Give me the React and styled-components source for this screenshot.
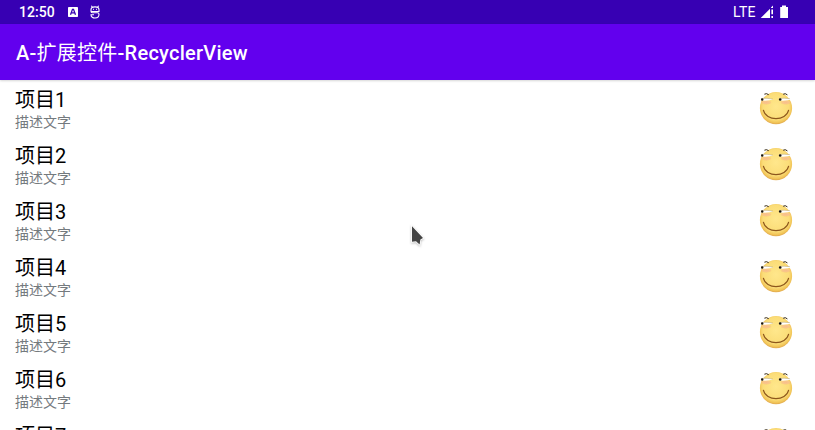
import React from 'react';
import styled, { createGlobalStyle } from 'styled-components';

const GlobalStyle = createGlobalStyle`
  * { box-sizing: border-box; }
  html, body { margin: 0; height: 100%; overflow: hidden; background: #fff; }
  body { font-family: Roboto, "Noto Sans CJK SC", sans-serif; }
`;

const Screen = styled.main`
  height: 430px;
  width: 815px;
  display: flex;
  flex-direction: column;
  overflow: hidden;
  background: #fff;
`;

const StatusBar = styled.div`
  flex: 0 0 24px;
  display: flex;
  justify-content: space-between;
  padding: 0 25px 0 19px;
  background: #3700b3;
  color: #fff;
`;

const StatusGroup = styled.div`
  display: flex;
  align-items: center;
  height: 24px;
`;

const Clock = styled.span`
  width: 48px;
  font-size: 14px;
  line-height: 24px;
  font-weight: 500;
  letter-spacing: 0.05px;
`;

const Network = styled.span`
  width: 27px;
  font-size: 14px;
  line-height: 24px;
  letter-spacing: 0.3px;
`;

const AppBar = styled.header`
  flex: 0 0 56px;
  display: flex;
  align-items: center;
  padding: 0 16px;
  background: #6200ee;
  color: #fff;
  box-shadow: 0 1px 2px rgba(0, 0, 0, 0.16);
  z-index: 1;
`;

const Title = styled.h1`
  margin: 0;
  font-size: 20px;
  line-height: 28px;
  font-weight: 500;
  letter-spacing: 0.25px;
  white-space: nowrap;
`;

const TitleCjk = styled.span`
  font-family: "Noto Sans CJK SC", sans-serif;
  font-weight: 400;
`;

const List = styled.ul`
  flex: 1;
  min-height: 0;
  margin: 0;
  padding: 0;
  list-style: none;
  overflow: hidden;
`;

const Item = styled.li`
  height: 56px;
  display: flex;
  justify-content: space-between;
  padding: 8px 21px 0 15px;
`;

const ItemTitle = styled.div`
  font-size: 20px;
  line-height: 24px;
  height: 24px;
  color: #000;
`;

const ItemText = styled.div`
  font-size: 14px;
  line-height: 20px;
  height: 20px;
  color: #747a7e;
`;

const FaceSvg = styled.svg`
  width: 36px;
  height: 36px;
  margin-top: 2px;
`;

const Pointer = styled.svg`
  position: absolute;
  left: 408px;
  top: 222px;
  z-index: 2;
`;

const PointerShape = styled.path`
  filter: drop-shadow(0 1px 1px rgba(0, 0, 0, 0.25));
`;

function Face() {
  return (
    <FaceSvg viewBox="0 0 36 36">
      <defs>
        <radialGradient id="skin" cx="50%" cy="45%" r="54%">
          <stop offset="0" stopColor="#ffe78c" />
          <stop offset="0.75" stopColor="#fbdd78" />
          <stop offset="0.93" stopColor="#f1c457" />
          <stop offset="1" stopColor="#e3ad50" />
        </radialGradient>
        <radialGradient id="blush">
          <stop offset="0" stopColor="#f8bd8c" />
          <stop offset="0.6" stopColor="#f9c38a" stopOpacity="0.85" />
          <stop offset="1" stopColor="#f7b578" stopOpacity="0" />
        </radialGradient>
      </defs>
      <circle cx="18" cy="18.1" r="16.1" fill="url(#skin)" />
      <ellipse cx="8.2" cy="12.4" rx="5.6" ry="2.5" fill="url(#blush)" />
      <ellipse cx="27.8" cy="12.4" rx="5.6" ry="2.5" fill="url(#blush)" />
      <path d="M3 8.6Q9 7.9 15.5 9.3Q10 11.1 4.2 10.5Z" fill="#fff" />
      <path d="M21 8.6Q27 7.9 34.5 9.2Q28 11.1 22 10.5Z" fill="#fff" />
      <path d="M3 8.5Q9 7.8 15 9.1M21 8.5Q26 7.8 32 8.7" fill="none" stroke="#9a8a68" strokeWidth="0.4" />
      <circle cx="4.2" cy="9.5" r="1.2" fill="#18150f" />
      <circle cx="22.2" cy="9.5" r="1.3" fill="#18150f" />
      <path d="M6.4 4.2Q8.4 2.9 10.7 4.7M25.2 4.2Q27.4 2.9 29.4 4.9" fill="none" stroke="#30240f" strokeWidth="1" />
      <path d="M5.3 19.8C8 31.6 28 31.6 30.7 19.8" fill="none" stroke="#8d571c" strokeWidth="1.1" />
    </FaceSvg>
  );
}

export default function App() {
  return (
    <Screen>
      <GlobalStyle />
      <StatusBar>
        <StatusGroup>
          <Clock>12:50</Clock>
          <svg width="42" height="24" viewBox="0 0 42 24">
            <rect x="1" y="7" width="10" height="10" rx="0.8" fill="#fff" />
            <path d="M3.5 14.7 5.5 9.3H6.5L8.5 14.7M4.5 12.8H7.6" fill="none" stroke="#3700b3" strokeWidth="1.3" />
            <path d="M24.4 5.8 25.2 7M31.6 5.8 30.8 7M24 11.5V9.8C24 5.9 32 5.9 32 9.8V11.5H24C24 12.5 24.5 12.7 25.4 12.7H30.5C31.5 12.7 32 13.2 32 14.2C32 19.2 24 19.2 24 14.8H27" fill="none" stroke="#fff" strokeWidth="1.1" />
            <path d="M26 9.3H27M29 9.3H30" stroke="#fff" strokeWidth="1" />
          </svg>
        </StatusGroup>
        <StatusGroup>
          <Network>LTE</Network>
          <svg width="30" height="24" viewBox="0 0 30 24">
            <path d="M.7 18 10 8.7V18ZM11 7.6 13 5.6V8H11ZM11.4 9.6H13V14.3H11.4ZM11.4 16H13V18H11.4Z" fill="#fff" />
            <path d="M20.2 7H22V5.6H26V7H28V18H20.2Z" fill="#fff" />
          </svg>
        </StatusGroup>
      </StatusBar>
      <AppBar>
        <Title>A-<TitleCjk>扩展控件</TitleCjk>-RecyclerView</Title>
      </AppBar>
      <List>
        {[1, 2, 3, 4, 5, 6, 7].map((n) => (
          <Item key={n}>
            <div>
              <ItemTitle>项目{n}</ItemTitle>
              {n < 7 && <ItemText>描述文字</ItemText>}
            </div>
            <Face />
          </Item>
        ))}
      </List>
      <Pointer width="20" height="28" viewBox="0 0 20 28">
        <PointerShape d="M4 4.2V19.8L8 19.2L11.6 22.5L12.4 17.5L15 16Z" fill="#444" stroke="#fff" strokeWidth="1.6" paintOrder="stroke" />
      </Pointer>
    </Screen>
  );
}
